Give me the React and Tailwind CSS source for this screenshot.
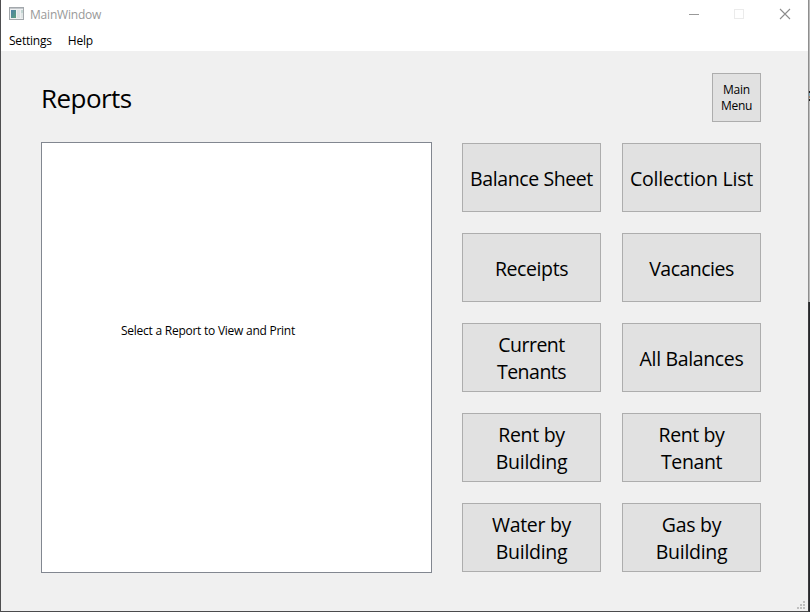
const reports = [
  { lines: ["Balance Sheet"], tracking: "tracking-[-0.4px]" },
  { lines: ["Collection List"], tracking: "tracking-[-0.2px]" },
  { lines: ["Receipts"], tracking: "tracking-[-0.4px]" },
  { lines: ["Vacancies"], tracking: "tracking-[-0.5px]" },
  { lines: ["Current", "Tenants"], tracking: "tracking-[-0.5px]" },
  { lines: ["All Balances"], tracking: "tracking-[-0.35px]" },
  { lines: ["Rent by", "Building"], tracking: "tracking-[-0.3px]" },
  { lines: ["Rent by", "Tenant"], tracking: "tracking-[-0.4px]" },
  { lines: ["Water by", "Building"], tracking: "tracking-[-0.3px]" },
  { lines: ["Gas by", "Building"], tracking: "tracking-[-0.3px]" },
];

function TitleBar() {
  return (
    <header className="flex h-[30px] items-start bg-white">
      <svg className="mt-[7px] ml-2 h-[14px] w-[15px] shrink-0" viewBox="0 0 15 14" shapeRendering="crispEdges">
        <defs>
          <linearGradient id="pane" x1="0" y1="0" x2="1" y2="1">
            <stop offset="0" stopColor="#4a7fa8" />
            <stop offset="1" stopColor="#5aa07c" />
          </linearGradient>
        </defs>
        <rect width="15" height="13" fill="#a3a8ac" />
        <rect x="1" y="1" width="13" height="11" fill="#eef0f1" />
        <rect x="1" y="1" width="13" height="1" fill="#c3c7cb" />
        <rect x="2" y="3" width="5" height="8" fill="url(#pane)" />
        <rect x="8" y="3" width="3" height="8" fill="#dde3e5" />
        <rect x="12" y="3" width="2" height="3" fill="#c2d5d2" />
        <rect x="12" y="6" width="2" height="5" fill="#dfe5e5" />
      </svg>
      <span className="mt-[7px] ml-[6px] text-[12px] leading-4 tracking-[-0.2px] text-[#999]">MainWindow</span>
      <svg className="mt-2 mr-[17px] ml-auto h-3 w-[103px]" viewBox="0 0 103 12" fill="none" shapeRendering="crispEdges">
        <path d="M1 6.5h10" stroke="#999" />
        <rect x="46.5" y="1.5" width="9" height="9" stroke="#ebebeb" />
        <path d="M92 1l10 10M102 1l-10 10" stroke="#8c8c8c" strokeWidth="1.1" shapeRendering="auto" />
      </svg>
    </header>
  );
}

function MenuBar() {
  return (
    <nav className="flex h-[21px] gap-4 bg-white pt-[3px] pl-2 text-[12px] leading-4 tracking-[-0.22px] text-black">
      <span>Settings</span>
      <span>Help</span>
    </nav>
  );
}

function SizeGrip() {
  return (
    <svg className="absolute right-[3px] bottom-[2px] h-2 w-2" viewBox="0 0 8 8" fill="#bfbfbf" shapeRendering="crispEdges">
      <path d="M6 0h2v2h-2zM3 3h2v2h-2zM6 3h2v2h-2zM0 6h2v2h-2zM3 6h2v2h-2zM6 6h2v2h-2z" />
    </svg>
  );
}

export default function App() {
  return (
    <div className="flex h-[612px] w-[810px] overflow-hidden bg-[#4a4a4c] font-['Open_Sans','Noto_Sans',sans-serif] text-black">
      <div className="w-px shrink-0 bg-[#4e4e50]" />
      <div className="relative flex h-[611px] w-[807px] shrink-0 flex-col bg-[#f0f0f0]">
        <TitleBar />
        <MenuBar />
        <main className="flex flex-col pt-[22px] pr-[47px] pl-10">
          <div className="flex h-[69px] items-start justify-between">
            <h1 className="mt-[7px] text-[26px] leading-[36px] tracking-[-0.55px]">Reports</h1>
            <button className="flex h-[49px] w-[49px] items-center justify-center border border-[#adadad] bg-[#e1e1e1] text-[12px] leading-4 tracking-[-0.25px]">
              <span>Main<br />Menu</span>
            </button>
          </div>
          <div className="flex gap-[30px]">
            <section className="h-[431px] w-[391px] border border-[#828790] bg-white pt-[180px] pl-[79px]">
              <p className="text-[12px] leading-4 tracking-[-0.25px] whitespace-nowrap">Select a Report to View and Print</p>
            </section>
            <section className="mt-px grid auto-rows-[69px] grid-cols-[139px_139px] gap-[21px]">
              {reports.map((r) => (
                <button
                  key={r.lines.join(" ")}
                  className={`flex flex-col items-center justify-center border border-[#adadad] bg-[#e1e1e1] pt-px text-[19.5px] leading-[27px] whitespace-nowrap ${r.tracking}`}
                >
                  {r.lines.map((l) => (
                    <span key={l}>{l}</span>
                  ))}
                </button>
              ))}
            </section>
          </div>
        </main>
        <SizeGrip />
      </div>
      <div className="flex w-[2px] shrink-0 flex-col">
        <div className="h-[302px] border-l border-[#8e8e8e] bg-[#bcbcbc] pt-[91px]">
          <div className="h-[2px] bg-[#222]" />
          <div className="h-[3px] bg-[#7aa5b8]" />
          <div className="h-[2px] bg-[#a08068]" />
          <div className="mt-px h-[2px] bg-[#222]" />
        </div>
        <div className="grow border-l border-[#3a3a3c] bg-[#26282c]" />
      </div>
    </div>
  );
}
